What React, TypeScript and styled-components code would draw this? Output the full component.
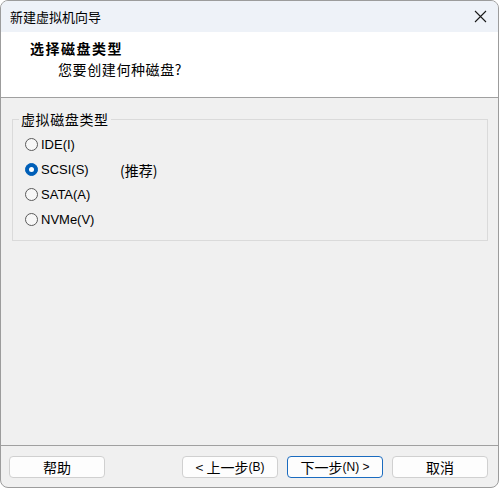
import React, { useState } from "react";
import styled, { createGlobalStyle, css } from "styled-components";

const GlobalStyle = createGlobalStyle`
  html, body {
    margin: 0;
    padding: 0;
    background: #ffffff;
  }
  * {
    box-sizing: border-box;
  }
`;

const cjk = `"Noto Sans CJK SC", "Microsoft YaHei", sans-serif`;
const ui = `"Liberation Sans", "Noto Sans CJK SC", sans-serif`;

const Window = styled.div`
  width: 499px;
  height: 488px;
  border: 1px solid #9c9c9c;
  border-radius: 8px;
  overflow: hidden;
  display: flex;
  flex-direction: column;
  background: #f0f0f0;
  font-family: ${cjk};
  color: #000;
`;

const TitleBar = styled.div`
  height: 31px;
  flex: none;
  display: flex;
  align-items: center;
  justify-content: space-between;
  padding: 0 11px 0 9px;
  background: #eef2f8;
  font-size: 13px;
`;

const CloseButton = styled.button`
  border: none;
  background: transparent;
  padding: 0;
  width: 14px;
  height: 14px;
  display: flex;
  align-items: center;
  justify-content: center;
  cursor: default;
`;

const Header = styled.div`
  height: 66px;
  flex: none;
  background: #ffffff;
  border-bottom: 1px solid #a0a0a0;
  padding: 6px 0 0 29px;
`;

const HeaderTitle = styled.div`
  font-size: 14px;
  font-weight: bold;
  line-height: 21px;
  letter-spacing: 1.5px;
`;

const HeaderSubtitle = styled.div`
  font-size: 14px;
  line-height: 21px;
  padding-left: 28px;
  letter-spacing: 0.6px;
`;

const Body = styled.div`
  flex: 1;
  padding: 12px 10px 0 11px;
`;

const Group = styled.fieldset`
  margin: 0;
  border: 1px solid #dadada;
  padding: 4px 0 8px 12px;
  display: flex;
  flex-direction: column;
`;

const Legend = styled.legend`
  font-size: 14px;
  line-height: 18px;
  padding: 0 2px;
  margin-left: -6px;
  letter-spacing: 0.6px;
`;

const RadioRow = styled.label`
  height: 25px;
  display: flex;
  align-items: center;
  font-family: ${ui};
  font-size: 13px;
  cursor: default;
`;

const RadioCircle = styled.span<{ $checked: boolean }>`
  width: 13px;
  height: 13px;
  border-radius: 50%;
  flex: none;
  margin-right: 3px;
  ${(p) =>
    p.$checked
      ? css`
          background: #005fb8;
          border: 1px solid #005fb8;
          display: flex;
          align-items: center;
          justify-content: center;
          &::after {
            content: "";
            width: 5px;
            height: 5px;
            border-radius: 50%;
            background: #ffffff;
          }
        `
      : css`
          background: #f7f7f7;
          border: 1px solid #5a5a5a;
        `}
`;

const RadioLabel = styled.span`
  width: 79px;
`;

const Hint = styled.span`
  font-family: ${cjk};
  font-size: 14px;
`;

const Footer = styled.div`
  flex: none;
  border-top: 1px solid #a0a0a0;
  height: 42px;
  padding: 10px 10px 0 8px;
  display: flex;
  align-items: flex-start;
`;

const Button = styled.button<{ $primary?: boolean }>`
  width: 96px;
  height: 22px;
  margin-left: 9px;
  padding: 0;
  border-radius: 4px;
  border: 1px solid ${(p) => (p.$primary ? "#1a6bbf" : "#d0d0d0")};
  background: #fdfdfd;
  font-family: ${cjk};
  font-size: 14px;
  line-height: 20px;
  color: #000;
  display: flex;
  align-items: center;
  justify-content: center;
  &:first-child {
    margin-left: 0;
    margin-right: auto;
  }
`;

const Mnemonic = styled.span`
  font-family: ${ui};
  font-size: 12px;
`;

const options = [
  { id: "ide", label: "IDE(I)" },
  { id: "scsi", label: "SCSI(S)", hint: "(推荐)" },
  { id: "sata", label: "SATA(A)" },
  { id: "nvme", label: "NVMe(V)" },
];

export default function App() {
  const [selected, setSelected] = useState("scsi");

  return (
    <>
      <GlobalStyle />
      <Window>
        <TitleBar>
          <span>新建虚拟机向导</span>
          <CloseButton aria-label="关闭">
            <svg width="13" height="13" viewBox="0 0 13 13">
              <path d="M1 1 L12 12 M12 1 L1 12" stroke="#1a1a1a" strokeWidth="1.1" fill="none" />
            </svg>
          </CloseButton>
        </TitleBar>
        <Header>
          <HeaderTitle>选择磁盘类型</HeaderTitle>
          <HeaderSubtitle>您要创建何种磁盘?</HeaderSubtitle>
        </Header>
        <Body>
          <Group>
            <Legend>虚拟磁盘类型</Legend>
            {options.map((o) => (
              <RadioRow key={o.id} onClick={() => setSelected(o.id)}>
                <RadioCircle $checked={selected === o.id} />
                <RadioLabel>{o.label}</RadioLabel>
                {o.hint && <Hint>{o.hint}</Hint>}
              </RadioRow>
            ))}
          </Group>
        </Body>
        <Footer>
          <Button>帮助</Button>
          <Button>
            &lt; 上一步<Mnemonic>(B)</Mnemonic>
          </Button>
          <Button $primary>
            下一步<Mnemonic>(N) &gt;</Mnemonic>
          </Button>
          <Button>取消</Button>
        </Footer>
      </Window>
    </>
  );
}
